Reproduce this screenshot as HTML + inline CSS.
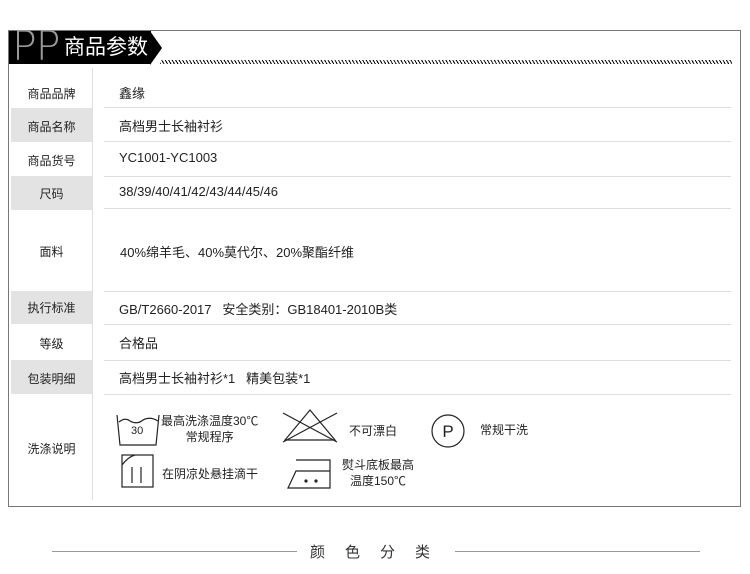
<!DOCTYPE html>
<html><head><meta charset="utf-8"><style>
body{margin:0;width:750px;height:574px;background:#fff;position:relative;overflow:hidden;font-family:"Liberation Sans","Noto Sans CJK SC",sans-serif;color:#222}
.a{position:absolute}
.box{left:8px;top:30px;width:731px;height:475px;border:1px solid #777}
.hd{left:9px;top:31px;width:142px;height:33px;background:#000}
.arr{left:150px;top:31px;width:0;height:0;border-top:17px solid transparent;border-bottom:17px solid transparent;border-left:12px solid #000}
.pp{left:12px;top:24px;font-size:41px;color:#999;font-family:"DejaVu Sans",sans-serif;font-weight:200;letter-spacing:-1px;line-height:44px}
.ht{left:64px;top:35px;font-size:21px;color:#fff;line-height:26px}
.hatch{left:160px;top:60px;width:572px;height:4px;background:repeating-linear-gradient(60deg,#000 0 1px,transparent 1px 3px)}
.vl{left:92px;top:68px;width:1px;height:432px;background:#ddd}
.sep{left:104px;width:627px;height:1px;background:#ddd}
.g{left:11px;width:81px;background:#e3e3e3}
.lb{left:11px;width:81px;text-align:center;font-size:12px}
.v{left:119px;font-size:13px}
.ic{font-size:12px}
</style></head><body>
<div class="a box"></div>
<div class="a hd"></div><div class="a arr"></div>
<div class="a pp">PP</div><div class="a ht">商品参数</div>
<div class="a hatch"></div>
<div class="a vl"></div>
<div class="a g" style="top:108px;height:34px"></div>
<div class="a g" style="top:176px;height:34px"></div>
<div class="a g" style="top:291px;height:33px"></div>
<div class="a g" style="top:360px;height:34px"></div>
<div class="a sep" style="top:107px"></div>
<div class="a sep" style="top:141px"></div>
<div class="a sep" style="top:176px"></div>
<div class="a sep" style="top:208px"></div>
<div class="a sep" style="top:291px"></div>
<div class="a sep" style="top:324px"></div>
<div class="a sep" style="top:360px"></div>
<div class="a sep" style="top:394px"></div>
<div class="a lb" style="top:85px">商品品牌</div><div class="a v" style="top:83px">鑫缘</div>
<div class="a lb" style="top:118px">商品名称</div><div class="a v" style="top:116px">高档男士长袖衬衫</div>
<div class="a lb" style="top:152px">商品货号</div><div class="a v" style="top:150px">YC1001-YC1003</div>
<div class="a lb" style="top:185px">尺码</div><div class="a v" style="top:184px">38/39/40/41/42/43/44/45/46</div>
<div class="a lb" style="top:243px">面料</div><div class="a v" style="top:242px;left:120px">40%绵羊毛、40%莫代尔、20%聚酯纤维</div>
<div class="a lb" style="top:299px">执行标准</div><div class="a v" style="top:299px">GB/T2660-2017&nbsp;&nbsp;&nbsp;安全类别：GB18401-2010B类</div>
<div class="a lb" style="top:335px">等级</div><div class="a v" style="top:333px">合格品</div>
<div class="a lb" style="top:370px">包装明细</div><div class="a v" style="top:368px">高档男士长袖衬衫*1&nbsp;&nbsp;&nbsp;精美包装*1</div>
<div class="a lb" style="top:440px">洗涤说明</div>
<svg class="a" style="left:110px;top:405px" width="340" height="90" viewBox="0 0 340 90" fill="none" stroke="#222" stroke-width="1.2">
<path d="M7 10 L10 40 H46 L49 10"/><path d="M9 17 Q15 12 20 16 Q27 20 33 15 Q40 11 48 16"/>
<path d="M200 5 L225 35 H175 Z"/><path d="M173 8 L227 37 M173 37 L227 8"/>
<rect x="12" y="50" width="31" height="32"/><path d="M12 60 Q18 52 25 50 M22 62 V78 M31 62 V78"/>
<path d="M186 55 H220 V83 H178 L186 66 H220"/><circle cx="196" cy="76" r="1" fill="#222"/><circle cx="206" cy="76" r="1" fill="#222"/>
</svg>
<svg class="a" style="left:430px;top:413px" width="40" height="36"><circle cx="18" cy="18" r="16" fill="none" stroke="#222" stroke-width="1.2"/><text x="18" y="24" font-size="17" text-anchor="middle" font-family="Liberation Sans" fill="#222">P</text></svg>
<div class="a" style="left:131px;top:425px;font-size:11px">30</div>
<div class="a ic" style="left:161px;top:413px;line-height:16px;text-align:center">最高洗涤温度30℃<br>常规程序</div>
<div class="a ic" style="left:349px;top:422px">不可漂白</div>
<div class="a ic" style="left:480px;top:421px">常规干洗</div>
<div class="a ic" style="left:162px;top:465px">在阴凉处悬挂滴干</div>
<div class="a ic" style="left:342px;top:457px;line-height:16px;text-align:center">熨斗底板最高<br>温度150℃</div>
<div class="a" style="left:52px;top:551px;width:245px;height:1px;background:#999"></div>
<div class="a" style="left:455px;top:551px;width:245px;height:1px;background:#999"></div>
<div class="a" style="left:310px;top:541px;font-size:15px;letter-spacing:20px;color:#333">颜色分类</div>
</body></html>
